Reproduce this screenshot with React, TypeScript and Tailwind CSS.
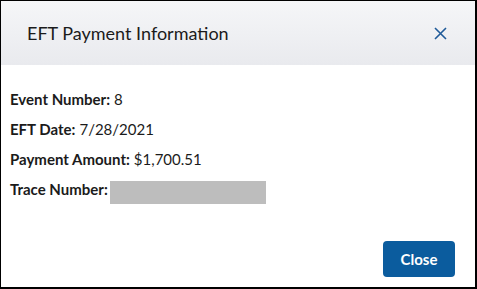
export default function App() {
  const rows: [string, string][] = [
    ["Event Number:", "8"],
    ["EFT Date:", "7/28/2021"],
    ["Payment Amount:", "$1,700.51"],
  ];

  return (
    <div className="w-[477px] h-[289px] bg-white border-l border-t border-r-2 border-b-2 border-black flex flex-col font-['Lato',sans-serif] text-[#1b1b1b]">
      {/* Header */}
      <div className="h-[64px] shrink-0 flex items-center justify-between pl-[26px] pr-[28px] bg-gradient-to-b from-[#f5f6f8] to-[#e9eaee]">
        <h2 className="text-[18px] leading-none">EFT Payment Information</h2>
        <button type="button" aria-label="Close" className="text-[#1f5a99]">
          <svg width="13" height="13" viewBox="0 0 13 13" fill="none" stroke="currentColor" strokeWidth="1.6">
            <path d="M1 1L12 12M12 1L1 12" />
          </svg>
        </button>
      </div>

      {/* Body */}
      <div className="flex flex-col pl-[9px] pt-[24px] gap-[10px] text-[15px]">
        {rows.map(([label, value]) => (
          <div key={label} className="h-[20px] flex items-center">
            <span className="font-bold">{label}</span>
            <span className="ml-1">{value}</span>
          </div>
        ))}
        <div className="h-[20px] flex items-center">
          <span className="font-bold">Trace Number:</span>
          <span className="ml-[2px] w-[156px] h-[23px] bg-[#bdbdbd] mt-[6px]" />
        </div>
      </div>

      {/* Footer */}
      <div className="mt-auto flex justify-end pr-[20px] pb-[10px]">
        <button
          type="button"
          className="w-[72px] h-[36px] rounded-[4px] bg-[#0b5c9e] text-white font-bold text-[15px]"
        >
          Close
        </button>
      </div>
    </div>
  );
}
